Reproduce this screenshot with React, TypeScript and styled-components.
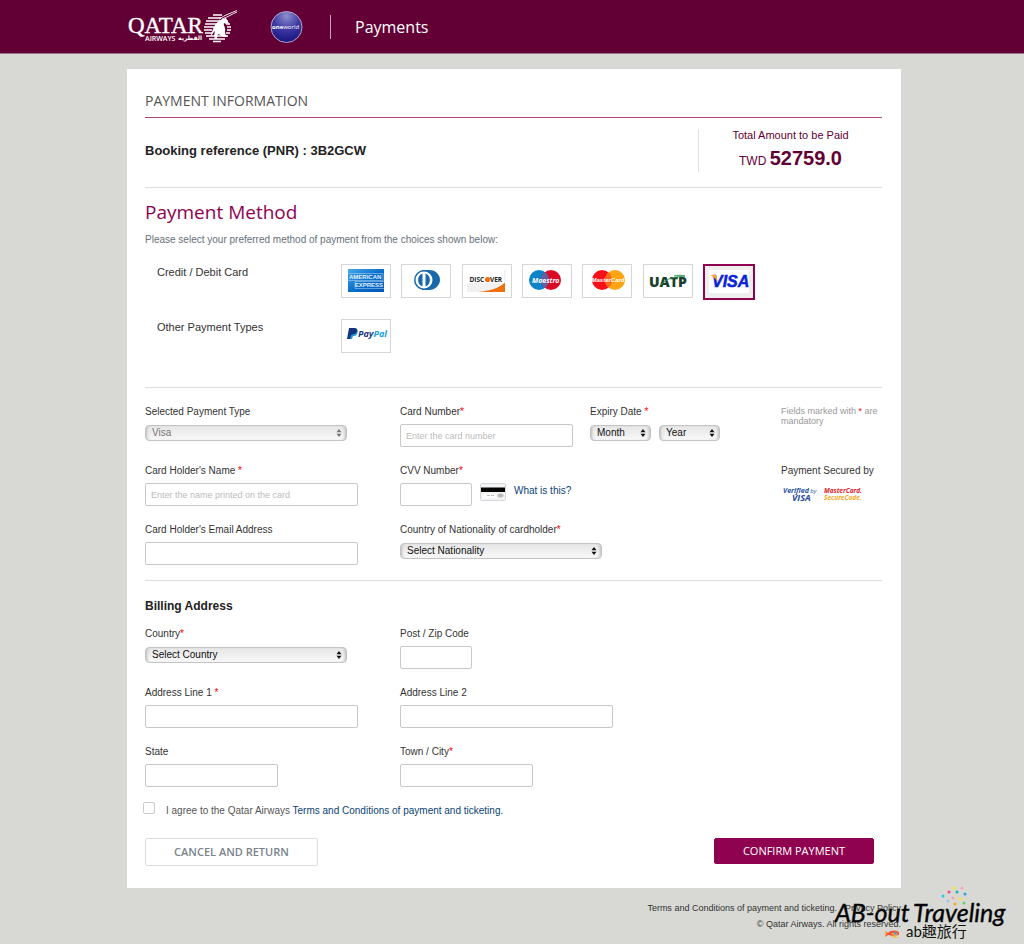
import React, { useState } from 'react';
import styled, { createGlobalStyle } from 'styled-components';

const sans = `"Liberation Sans", Arial, sans-serif`;
const display = `"Open Sans", "Noto Sans", sans-serif`;

const GlobalStyle = createGlobalStyle`
  *, *::before, *::after { box-sizing: border-box; }
  body {
    margin: 0;
    background: #d8d9d4;
    color: #333;
    font: 10px/12px ${sans};
  }
  h1, h2, h3, p { margin: 0; }
`;

const Shell = styled.div`
  max-width: 778px;
  margin: 0 auto;
  padding-left: 4px;
`;

const Header = styled.header`
  background: #620035;
  border-bottom: 1px solid #a0708a;
`;

const HeaderInner = styled(Shell)`
  display: flex;
  align-items: center;
  height: 53px;
`;

const OneWorld = styled.a`
  display: flex;
  margin-left: 31px;
  padding-right: 27px;
`;

const HomeLink = styled.a`
  display: flex;
`;

const HeaderTitle = styled.h1`
  border-left: 1px solid #c9a3b6;
  padding-left: 24px;
  color: #fff;
  font: 400 16px/24px ${display};
`;

const Card = styled.main`
  margin-top: 15px;
  padding: 20px 19px 22px 18px;
  background: #fff;
`;

const PageTitle = styled.h2`
  padding-bottom: 4px;
  border-bottom: 1px solid #b8447c;
  color: #555;
  font: 400 14px/24px ${display};
`;

const Summary = styled.section`
  display: flex;
  justify-content: space-between;
  align-items: center;
  padding: 11px 0 15px;
  border-bottom: 1px solid #dcdcdc;
`;

const Booking = styled.p`
  color: #222;
  font: 700 13px/16px ${sans};
`;

const Total = styled.div`
  display: flex;
  flex-direction: column;
  gap: 7px;
  width: 184px;
  border-left: 1px solid #e0e0e0;
  text-align: center;
  color: #620035;
  font-size: 11px;
`;

const Amount = styled.p`
  font-size: 12px;
  line-height: 22px;
  strong {
    font-size: 20px;
    line-height: 20px;
  }
`;

const Methods = styled.section`
  padding: 10px 0 13px;
  border-bottom: 1px solid #dcdcdc;
`;

const SectionTitle = styled.h2`
  color: #8e0250;
  font: 400 19px/28px ${display};
`;

const Intro = styled.p`
  margin: 6px 0 16px;
  color: #66707a;
  line-height: 16px;
`;

const MethodRow = styled.div`
  display: flex;
  height: 55px;
  padding-left: 12px;
`;

const MethodName = styled.h3`
  width: 184px;
  color: #333;
  font: 400 11px/16px ${sans};
`;

const Tiles = styled.div`
  display: flex;
  justify-content: space-between;
  align-items: flex-start;
  width: 414px;
`;

const Tile = styled.label<{ $on: boolean }>`
  display: flex;
  align-items: center;
  justify-content: center;
  width: ${p => (p.$on ? 52 : 50)}px;
  height: ${p => (p.$on ? 36 : 34)}px;
  border: ${p => (p.$on ? '2px solid #8e0250' : '1px solid #d6d6d6')};
  background: ${p => (p.$on ? '#eee' : '#fff')};
  cursor: pointer;
`;

const HiddenRadio = styled.input`
  position: absolute;
  opacity: 0;
  pointer-events: none;
`;

const FormGrid = styled.div`
  display: grid;
  grid-template-columns: minmax(0, 255fr) minmax(0, 190fr) minmax(0, 191fr) minmax(0, 101fr);
  row-gap: 18px;
`;

const CardSection = styled.section`
  padding: 18px 0 15px;
  border-bottom: 1px solid #dcdcdc;
`;

const Billing = styled.section`
  padding-top: 17px;
`;

const BillingTitle = styled.h3`
  margin-bottom: 14px;
  color: #222;
  font: 700 12px/16px ${sans};
`;

const Field = styled.div<{ $span?: number }>`
  grid-column: span ${p => p.$span || 1};
`;

const FieldLabel = styled.label`
  display: block;
  margin-bottom: 6px;
`;

const Star = styled.span`
  color: #f00;
`;

const Controls = styled.div`
  display: flex;
  align-items: flex-start;
  gap: 8px;
  height: 23px;
`;

const TextBox = styled.input<{ $w: number }>`
  width: ${p => p.$w}px;
  height: 23px;
  padding: 0 5px;
  border: 1px solid #c8c8c8;
  border-radius: 2px;
  background: #fff;
  font: 9px/12px ${sans};
  &::placeholder { color: #bbb; }
`;

const SelectWrap = styled.span<{ $w: number }>`
  position: relative;
  display: block;
  width: ${p => p.$w}px;
  padding-top: 1px;
  svg {
    position: absolute;
    right: 5px;
    top: 5px;
    pointer-events: none;
  }
`;

const SelectBox = styled.select`
  appearance: none;
  display: block;
  width: 100%;
  height: 16px;
  padding: 0 6px;
  border: 1px solid #c4c4c4;
  border-radius: 4px;
  background: linear-gradient(#e6e6e6, #f8f8f8);
  box-shadow: inset 3px 0 3px -2px #bbb, inset -3px 0 3px -2px #bbb;
  color: #111;
  font: 10px/12px ${sans};
  &:disabled { color: #777; opacity: 1; }
`;

const TextLink = styled.a`
  color: #0b3f74;
  text-decoration: none;
`;

const CvvHelp = styled(TextLink)`
  line-height: 16px;
`;

const Hint = styled.p`
  color: #999;
  font-size: 9px;
  line-height: 10px;
`;

const Agree = styled.div`
  display: flex;
  align-items: flex-start;
  gap: 11px;
  padding-top: 15px;
  margin-left: -2px;
  color: #555;
  label { line-height: 18px; }
`;

const Tick = styled.input`
  appearance: none;
  width: 12px;
  height: 12px;
  margin: 0;
  border: 1px solid #ccc;
  border-radius: 2px;
  background: #fff;
  &:checked { background: #8e0250; }
`;

const Actions = styled.div`
  display: flex;
  justify-content: space-between;
  align-items: flex-start;
  margin-top: 18px;
  padding-right: 8px;
`;

const Button = styled.button<{ $primary?: boolean }>`
  width: ${p => (p.$primary ? 160 : 173)}px;
  height: ${p => (p.$primary ? 26 : 28)}px;
  padding: 0;
  border: 1px solid ${p => (p.$primary ? '#8e0250' : '#ddd')};
  border-radius: 2px;
  background: ${p => (p.$primary ? '#8e0250' : '#fff')};
  color: ${p => (p.$primary ? '#fff' : '#7a838b')};
  font: ${p => (p.$primary ? 400 : 600)} 11px/16px ${display};
  cursor: pointer;
`;

const Footer = styled.footer`
  position: relative;
  padding: 12px 0;
  text-align: right;
  font-size: 9px;
  line-height: 16px;
  a { color: #333; text-decoration: none; }
`;

const Links = styled.nav`
  display: flex;
  justify-content: flex-end;
  gap: 8px;
`;

const Watermark = styled.svg`
  position: absolute;
  right: -110px;
  top: -4px;
`;

const QatarLogo = () => (
  <svg width="112" height="36" viewBox="0 0 112 36" aria-label="Qatar Airways" role="img" fill="#fff">
    <text x="1" y="24" fontFamily="Liberation Serif, serif" fontSize="23" stroke="#fff" strokeWidth=".4">QATAR</text>
    <text x="18" y="32" fontFamily="Open Sans, sans-serif" fontSize="7" fontWeight="600">AIRWAYS</text>
    <text x="51" y="31" fontFamily="DejaVu Sans, sans-serif" fontSize="6" fontWeight="700">القطرية</text>
    <g stroke="#fff" strokeWidth="1.3">
      <path d="M86 6h9M81 9h13M79 12h14M78 15h12M77 18h10M77 21h8M78 24h7M79 27h22M82 30h16M86 32.500h8M99 12h2M99 15h4M100 18h4M100 21h4M99 24h4" />
    </g>
    <path d="M83 27c2-2 2-5 3-7 2-5 5-8 9-10l4-1c1 2 1 3 3 5-2 1-4 1-5 0-1 3 2 4 1 8 0 3 1 5 2 6-5 0-6-1-8-3-2 1-2 2-2 5h-2c-1-3-1-5 0-8-2 1-2 4-5 5z" />
    <path d="M92 10C98 6 104 4 110 1.500M95 10C101 8 105 5 110 3" fill="none" stroke="#fff" strokeWidth=".9" />
  </svg>
);

const OneWorldLogo = () => (
  <svg width="33" height="34" viewBox="0 0 33 34" role="img" aria-label="oneworld">
    <defs>
      <radialGradient id="globe" cx=".5" cy=".15" r=".9">
        <stop offset="0" stopColor="#8f8fce" />
        <stop offset=".5" stopColor="#3b36a0" />
        <stop offset="1" stopColor="#14107c" />
      </radialGradient>
    </defs>
    <circle cx="16.500" cy="17" r="15.500" fill="url(#globe)" stroke="#b3a4cc" />
    <text x="2" y="19" fill="#fff" fontFamily="Open Sans, sans-serif" fontSize="6"><tspan fontWeight="700">one</tspan>world</text>
  </svg>
);

const logoFont = 'Open Sans, sans-serif';
const plainFont = 'Liberation Sans, sans-serif';

const art: Record<string, React.ReactNode> = {
  'American Express': (
    <>
      <defs><linearGradient id="amex" x2="1" y2="1"><stop stopColor="#48a9ea" /><stop offset=".5" stopColor="#0b70cc" /><stop offset="1" stopColor="#0057b8" /></linearGradient></defs>
      <path d="M6 4h36v23H6z" fill="url(#amex)" />
      <g fill="#e3f2fd" fontFamily={plainFont} fontSize="6" fontWeight="700">
        <text x="7" y="14">AMERICAN</text>
        <text x="41" y="22" textAnchor="end">EXPRESS</text>
      </g>
      <path d="M6 8.500h35M41 8.500v7H6M13 16.500h29M13 16.500v7h29" fill="none" stroke="#bfe0f8" strokeWidth=".5" />
    </>
  ),
  'Diners Club': (
    <>
      <path d="M20 5h7c7 0 11 5 11 10s-5 10-11 10h-7z" fill="#1769ac" />
      <circle cx="22" cy="15" r="10" fill="#1769ac" />
      <circle cx="22" cy="15" r="8.500" fill="#fff" />
      <path d="M20.500 8.500v13a7 7 0 0 1 0-13zM23.500 8.500v13a7 7 0 0 0 0-13z" fill="#1769ac" />
    </>
  ),
  Discover: (
    <>
      <path d="M4 5h38v22H4z" fill="#fff" />
      <path d="M4 18h38v9H4z" fill="#f1f1f1" />
      <path d="M42 17.500V27H15c12-1 21-4 27-9.500z" fill="#f07010" />
      <path d="M42 5v13" stroke="#ccc" strokeWidth=".5" />
      <circle cx="24.600" cy="14.600" r="2.700" fill="#f07010" />
      <g fill="#222" fontFamily={logoFont} fontSize="6.500" fontWeight="700">
        <text x="6.500" y="17">DISC</text>
        <text x="27" y="17">VER</text>
      </g>
    </>
  ),
  Maestro: (
    <>
      <circle cx="16" cy="15" r="10" fill="#0c83c8" />
      <circle cx="28" cy="15" r="10" fill="#dc0a28" />
      <path d="M22 7a10 10 0 0 1 0 16 10 10 0 0 1 0-16z" fill="#6460a0" />
      <text x="9" y="17.500" fill="#fff" fontFamily={logoFont} fontSize="7" fontWeight="700" fontStyle="italic">Maestro</text>
    </>
  ),
  MasterCard: (
    <>
      <circle cx="19" cy="15" r="10" fill="#f7101a" />
      <circle cx="32" cy="15" r="10" fill="#ffa414" />
      <path d="M25.500 7.400a10 10 0 0 1 0 15.200 10 10 0 0 1 0-15.200z" fill="#fb6818" />
      <text x="25" y="17" textAnchor="middle" fill="#fff" fontFamily={plainFont} fontSize="6" fontWeight="700" fontStyle="italic">MasterCard</text>
    </>
  ),
  UATP: (
    <>
      <text x="5" y="22" fill="#17402c" fontFamily={logoFont} fontSize="14" fontWeight="800">UATP</text>
      <path d="M17 20c4-5 9-8 24-9-4-1-8-1-11 0" fill="none" stroke="#3d9b58" strokeWidth="1" />
    </>
  ),
  Visa: (
    <>
      <path d="M4 4h40v23H4z" fill="#fff" />
      <text x="7" y="21" fill="#0a22d8" stroke="#0a22d8" strokeWidth=".5" fontFamily={plainFont} fontSize="16" fontWeight="700" fontStyle="italic">VISA</text>
      <path d="M5 9h6l2 7c-2-3-4-5-8-7z" fill="#f5a51c" />
    </>
  ),
  PayPal: (
    <>
      <path d="M7 8h5c3 0 4 2 3 4-1 3-3 3-5 3l-1 4H5z" fill="#14357c" />
      <path d="M12 14c2 0 3-1 3-4 1 1 1 2 0 4s-3 2-4 2l-1 3H8l1-4z" fill="#189bd8" />
      <text x="16" y="17" fill="#173a86" fontFamily={logoFont} fontSize="9" fontWeight="700" fontStyle="italic">Pay<tspan fill="#1c9fdc">Pal</tspan></text>
    </>
  ),
};

const Arrows = ({ color = '#111' }: { color?: string }) => (
  <svg width="6" height="8" viewBox="0 0 6 8" fill={color} aria-hidden="true">
    <path d="M3 0l2.500 3.200h-5zM3 8L.5 4.800h5z" />
  </svg>
);

const CvvCard = () => (
  <svg width="26" height="18" viewBox="0 0 26 18" aria-hidden="true">
    <rect x=".5" y=".5" width="25" height="17" rx="1" fill="#f3f4f6" stroke="#d4d6da" />
    <path d="M1 4.500h24v4.500H1z" fill="#050505" />
    <path d="M3 11h13v4H3z" fill="#fff" />
    <path d="M7 12.500h3M11 12.500h3" stroke="#bbb" />
    <ellipse cx="20.500" cy="12.500" rx="3" ry="2" fill="#bbb" />
  </svg>
);

const SecureLogos = () => (
  <svg width="82" height="20" viewBox="0 0 82 20" role="img" aria-label="Verified by Visa, MasterCard SecureCode" fontFamily={logoFont} fontStyle="italic" fontWeight="700">
    <text x="2" y="10" fill="#2b55a0" fontSize="7">Verified<tspan fontSize="6" fontWeight="400"> by</tspan></text>
    <text x="11" y="18" fill="#1f4a9c" fontSize="9">VISA</text>
    <text x="43" y="10" fill="#e0202c" fontSize="6.500">MasterCard.</text>
    <text x="43" y="17" fill="#f7a81c" fontSize="6.500" fontWeight="700">SecureCode.</text>
  </svg>
);

function PaymentTile({ name, value, onPick }: { name: string; value: string; onPick: (v: string) => void }) {
  return (
    <Tile $on={value === name}>
      <HiddenRadio type="radio" name="method" aria-label={name} checked={value === name} onChange={() => onPick(name)} />
      <svg width="48" height="32" viewBox="0 0 48 32" aria-hidden="true">{art[name]}</svg>
    </Tile>
  );
}

interface ItemProps { id: string; label: string; star?: string; width: number; span?: number }

function TextField({ id, label, star, width, span, placeholder, children }: ItemProps & { placeholder?: string; children?: React.ReactNode }) {
  return (
    <Field $span={span}>
      <FieldLabel htmlFor={id}>{label}{star && <Star>{star}</Star>}</FieldLabel>
      <Controls><TextBox id={id} $w={width} placeholder={placeholder} />{children}</Controls>
    </Field>
  );
}

function Select({ id, text, width, disabled, name }: { id: string; text: string; width: number; disabled?: boolean; name?: string }) {
  return (
    <SelectWrap $w={width}>
      <SelectBox id={id} disabled={disabled} aria-label={name}><option>{text}</option></SelectBox>
      <Arrows color={disabled ? '#777' : undefined} />
    </SelectWrap>
  );
}

function SelectField({ id, label, star, width, span, text, disabled, children }: ItemProps & { text: string; disabled?: boolean; children?: React.ReactNode }) {
  return (
    <Field $span={span}>
      <FieldLabel htmlFor={id}>{label}{star && <Star>{star}</Star>}</FieldLabel>
      <Controls><Select id={id} text={text} width={width} disabled={disabled} />{children}</Controls>
    </Field>
  );
}

const cards = ['American Express', 'Diners Club', 'Discover', 'Maestro', 'MasterCard', 'UATP', 'Visa'];

const confetti: [number, number, string][] = [
  [121, 4, '#fde02c'], [129, 4, '#f7a3b8'], [116, 8, '#f24d8c'], [124, 8, '#17b3a6'], [132, 10, '#2aa4dd'],
  [110, 12, '#35c0ee'], [120, 14, '#f7a3b8'], [127, 15, '#fde02c'], [115, 17, '#9fc5ee'], [131, 19, '#5ed66a'], [122, 20, '#f7a81c'],
];

export default function App() {
  const [method, setMethod] = useState('Visa');
  return (
    <>
      <GlobalStyle />
      <Header>
        <HeaderInner>
          <HomeLink href="#"><QatarLogo /></HomeLink>
          <OneWorld href="#"><OneWorldLogo /></OneWorld>
          <HeaderTitle>Payments</HeaderTitle>
        </HeaderInner>
      </Header>
      <Shell>
        <Card>
          <PageTitle>PAYMENT INFORMATION</PageTitle>
          <Summary>
            <Booking>Booking reference (PNR) : 3B2GCW</Booking>
            <Total>
              <p>Total Amount to be Paid</p>
              <Amount>TWD <strong>52759.0</strong></Amount>
            </Total>
          </Summary>
          <Methods>
            <SectionTitle>Payment Method</SectionTitle>
            <Intro>Please select your preferred method of payment from the choices shown below:</Intro>
            <MethodRow>
              <MethodName>Credit / Debit Card</MethodName>
              <Tiles>{cards.map(c => <PaymentTile key={c} name={c} value={method} onPick={setMethod} />)}</Tiles>
            </MethodRow>
            <MethodRow>
              <MethodName>Other Payment Types</MethodName>
              <Tiles><PaymentTile name="PayPal" value={method} onPick={setMethod} /></Tiles>
            </MethodRow>
          </Methods>
          <CardSection>
            <FormGrid>
              <SelectField id="type" label="Selected Payment Type" width={202} text="Visa" disabled />
              <TextField id="number" label="Card Number" star="*" width={173} placeholder="Enter the card number" />
              <SelectField id="month" label="Expiry Date " star="*" width={61} text="Month">
                <Select id="year" name="Expiry year" text="Year" width={61} />
              </SelectField>
              <Hint>Fields marked with <Star>*</Star> are mandatory</Hint>
              <TextField id="holder" label="Card Holder's Name " star="*" width={213} placeholder="Enter the name printed on the card" />
              <TextField id="cvv" label="CVV Number" star="*" width={72} span={2}>
                <CvvCard />
                <CvvHelp href="#">What is this?</CvvHelp>
              </TextField>
              <Field>
                <FieldLabel as="p">Payment Secured by</FieldLabel>
                <SecureLogos />
              </Field>
              <TextField id="email" label="Card Holder's Email Address" width={213} />
              <SelectField id="nation" label="Country of Nationality of cardholder" star="*" width={202} span={2} text="Select Nationality" />
            </FormGrid>
          </CardSection>
          <Billing>
            <BillingTitle>Billing Address</BillingTitle>
            <FormGrid>
              <SelectField id="country" label="Country" star="*" width={202} text="Select Country" />
              <TextField id="zip" label="Post / Zip Code" width={72} span={3} />
              <TextField id="line1" label="Address Line 1 " star="*" width={213} />
              <TextField id="line2" label="Address Line 2" width={213} span={3} />
              <TextField id="state" label="State" width={133} />
              <TextField id="town" label="Town / City" star="*" width={133} span={3} />
            </FormGrid>
            <Agree>
              <Tick id="agree" type="checkbox" />
              <label htmlFor="agree">I agree to the Qatar Airways <TextLink href="#">Terms and Conditions of payment and ticketing.</TextLink></label>
            </Agree>
            <Actions>
              <Button type="button">CANCEL AND RETURN</Button>
              <Button type="button" $primary>CONFIRM PAYMENT</Button>
            </Actions>
          </Billing>
        </Card>
        <Footer>
          <Links>
            <a href="#">Terms and Conditions of payment and ticketing.</a>
            <a href="#">Privacy Policy</a>
          </Links>
          <p>© Qatar Airways. All rights reserved.</p>
          <Watermark width="178" height="58" viewBox="0 0 178 58" role="img" aria-label="AB-out Traveling">
            <g fontFamily="Lato, sans-serif" fontStyle="italic" fontSize="25" fill="#050505" stroke="#050505" strokeWidth=".4">
              <text x="2" y="38">AB-out</text>
              <text x="80" y="38">Traveling</text>
            </g>
            {confetti.map(([x, y, c]) => <circle key={`${x}-${y}`} cx={x} cy={y} r="1.500" fill={c} />)}
            <path d="M52 47l3 2c3-3 7-3 11-1v3c-4 1-8 1-11 0l-3 2z" fill="#f0543c" />
            <path d="M58 49h7l-3 3zM52 47l2 2-2 4zM57 53l5-1 4 2z" fill="#f9b52c" />
            <path d="M60 48l4 1-2 2z" fill="#38a7d8" />
            <text x="73" y="53" fontFamily="Lato, Noto Sans CJK TC, sans-serif" fontSize="15" fill="#111">ab趣旅行</text>
          </Watermark>
        </Footer>
      </Shell>
    </>
  );
}
